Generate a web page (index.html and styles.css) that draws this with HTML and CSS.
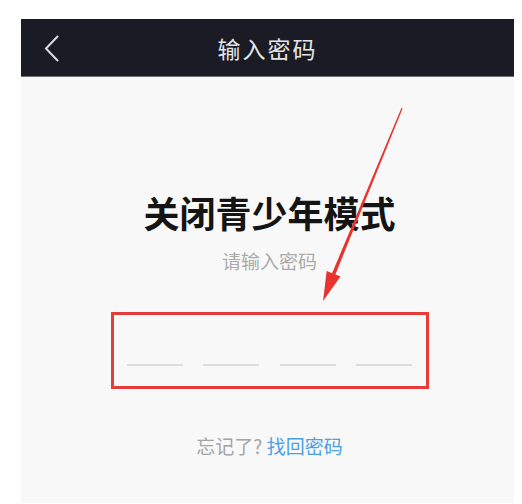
FILE: index.html
```html
<!DOCTYPE html>
<html>
<head>
    <meta name="viewport" content="width=device-width, initial-scale=1.0">
    <link rel="stylesheet" href="styles.css">
</head>
<body>
    <div class="screen">
        <div class="top-bar">
            <svg class="back" width="20" height="30" viewBox="0 0 20 30">
                <polyline points="16,3 4,15.5 16,28" fill="none" stroke="#dcdcdc" stroke-width="2"/>
            </svg>
            <span class="bar-title">输入密码</span>
        </div>

        <div class="panel">
            <h1>关闭青少年模式</h1>
            <p class="hint">请输入密码</p>

            <div class="code-box">
                <span class="slot"></span>
                <span class="slot"></span>
                <span class="slot"></span>
                <span class="slot"></span>
            </div>

            <p class="forgot">忘记了? <a href="#">找回密码</a></p>

            <!-- annotation arrow drawn over the page -->
            <svg class="arrow" width="493" height="426" viewBox="0 0 493 426">
                <polygon points="380.4,31 381.6,31.4 314.2,197.9 311,196.5" fill="#e8332f"/>
                <polygon points="302,224 319.5,199.6 305.7,194" fill="#e8332f"/>
            </svg>
        </div>
    </div>
</body>
</html>
```

FILE: styles.css
```css
body {
    margin: 0;
    background-color: #ffffff;
    font-family: 'Noto Sans CJK SC', 'Noto Sans', sans-serif;
}

.screen {
    width: 493px;
    margin: 19px 0 0 21px;
}

.top-bar {
    position: relative;
    height: 57px;
    background-color: #1a1b25;
    border-bottom: 1px solid #6b6c70;
    display: flex;
    align-items: center;
    justify-content: center;
}

.back {
    position: absolute;
    left: 21px;
    top: 14px;
}

.bar-title {
    color: #e6e6e6;
    font-size: 23px;
    letter-spacing: 2px;
}

.panel {
    position: relative;
    height: 426px;
    background-color: #f8f8f8;
    padding-top: 115px;
    box-sizing: border-box;
    display: flex;
    flex-direction: column;
    align-items: center;
}

h1 {
    margin: 0 0 0 4px;
    font-size: 36px;
    line-height: 40px;
    font-weight: 700;
    color: #141414;
}

.hint {
    margin: 17px 0 0 4px;
    font-size: 19px;
    line-height: 24px;
    color: #ababab;
}

.code-box {
    margin: 39px 0 0 5px;
    width: 318px;
    height: 77px;
    box-sizing: border-box;
    border: 3px solid #e53b3b;
    padding: 49px 14px 0 13px;
    display: flex;
    justify-content: space-between;
    align-items: flex-start;
}

.slot {
    width: 56px;
    height: 2px;
    background-color: #dcdcdc;
}

.forgot {
    margin: 45px 0 0 4px;
    font-size: 19px;
    line-height: 24px;
    color: #a4a4a4;
}

.forgot a {
    color: #4c9fe3;
    text-decoration: none;
}

.arrow {
    position: absolute;
    left: 0;
    top: 0;
}
```
